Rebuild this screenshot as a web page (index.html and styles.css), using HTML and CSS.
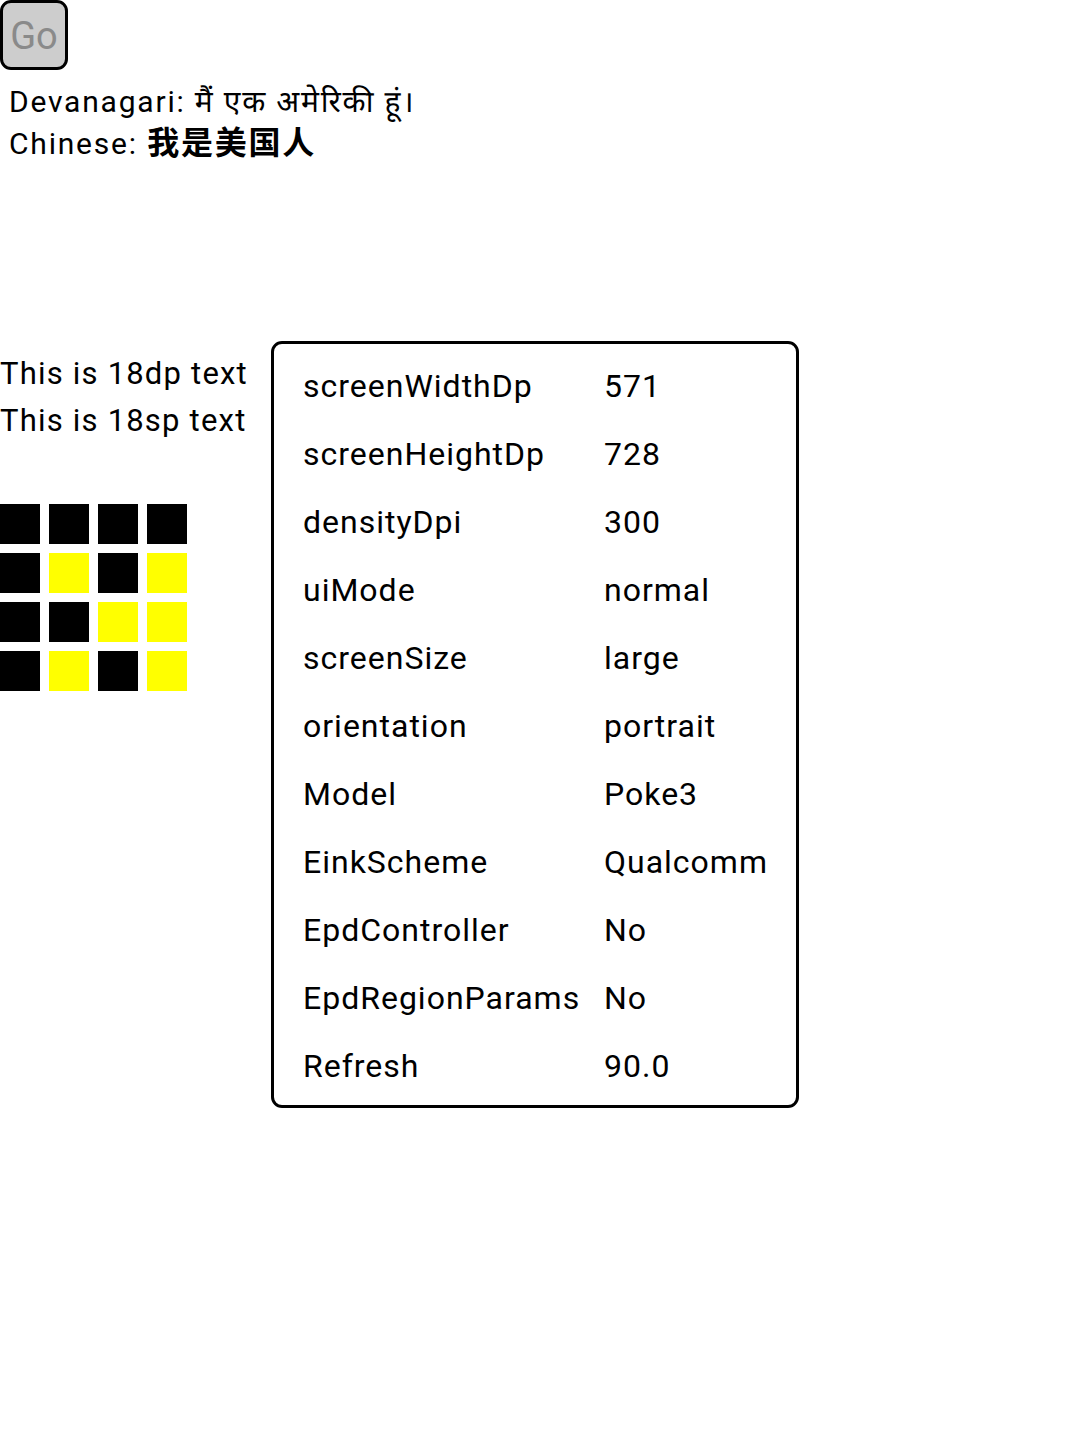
FILE: index.html
```html
<!DOCTYPE html>
<html>
<head>
<meta charset="utf-8">
<link rel="stylesheet" href="styles.css">
</head>
<body>
<div class="top">
  <button class="go">Go</button>
  <div class="lang">
    <div class="line">Devanagari: मैं एक अमेरिकी हूं।</div>
    <div class="line">Chinese: <span class="cjk">我是美国人</span></div>
  </div>
</div>
<div class="main">
  <div class="left">
    <div class="size-text first">This is 18dp text</div>
    <div class="size-text">This is 18sp text</div>
    <div class="grid">
      <div class="sq b"></div><div class="sq b"></div><div class="sq b"></div><div class="sq b"></div>
      <div class="sq b"></div><div class="sq y"></div><div class="sq b"></div><div class="sq y"></div>
      <div class="sq b"></div><div class="sq b"></div><div class="sq y"></div><div class="sq y"></div>
      <div class="sq b"></div><div class="sq y"></div><div class="sq b"></div><div class="sq y"></div>
    </div>
  </div>
  <div class="info">
    <div class="row"><span class="k">screenWidthDp</span><span class="v">571</span></div>
    <div class="row"><span class="k">screenHeightDp</span><span class="v">728</span></div>
    <div class="row"><span class="k">densityDpi</span><span class="v">300</span></div>
    <div class="row"><span class="k">uiMode</span><span class="v">normal</span></div>
    <div class="row"><span class="k">screenSize</span><span class="v">large</span></div>
    <div class="row"><span class="k">orientation</span><span class="v">portrait</span></div>
    <div class="row"><span class="k">Model</span><span class="v">Poke3</span></div>
    <div class="row"><span class="k">EinkScheme</span><span class="v">Qualcomm</span></div>
    <div class="row"><span class="k">EpdController</span><span class="v">No</span></div>
    <div class="row"><span class="k">EpdRegionParams</span><span class="v">No</span></div>
    <div class="row"><span class="k">Refresh</span><span class="v">90.0</span></div>
  </div>
</div>
</body>
</html>
```
FILE: styles.css
```css
html, body {
  margin: 0;
  padding: 0;
  background: #ffffff;
}
body {
  font-family: Roboto, "Noto Sans Devanagari", "Noto Sans", "Noto Sans CJK SC", sans-serif;
  color: #000000;
  width: 1072px;
  height: 1448px;
}
.top {
  display: flex;
  flex-direction: column;
  align-items: flex-start;
}
.go {
  box-sizing: border-box;
  width: 68px;
  height: 70px;
  margin: 0;
  padding: 3px 0 0 0;
  border: 3px solid #000;
  border-radius: 11px;
  background: #cdcdcd;
  color: #8a8a8a;
  font-family: Roboto, sans-serif;
  font-size: 38px;
  line-height: 61px;
  text-align: center;
}
.lang {
  margin-top: 13px;
  padding-left: 9px;
  font-size: 30px;
  letter-spacing: 1.8px;
}
.line {
  line-height: 38px;
  white-space: nowrap;
}
.cjk {
  font-family: "Noto Sans CJK SC", sans-serif;
  font-weight: 700;
  font-size: 32px;
}
.main {
  display: flex;
  align-items: flex-start;
  margin-top: 178px;
}
.left {
  width: 271px;
  display: flex;
  flex-direction: column;
}
.size-text {
  font-size: 31px;
  letter-spacing: 1.2px;
  line-height: 47px;
  white-space: nowrap;
}
.size-text.first {
  margin-top: 9px;
}
.grid {
  margin-top: 60px;
  display: grid;
  grid-template-columns: repeat(4, 40px);
  grid-auto-rows: 40px;
  gap: 9px;
}
.sq.b { background: #000000; }
.sq.y { background: #ffff00; }
.info {
  box-sizing: border-box;
  width: 528px;
  border: 3px solid #000;
  border-radius: 11px;
  padding: 8px 0 5px 29px;
}
.row {
  display: flex;
  font-size: 32px;
  letter-spacing: 1px;
  line-height: 68px;
  white-space: nowrap;
}
.k {
  width: 301px;
}
```
